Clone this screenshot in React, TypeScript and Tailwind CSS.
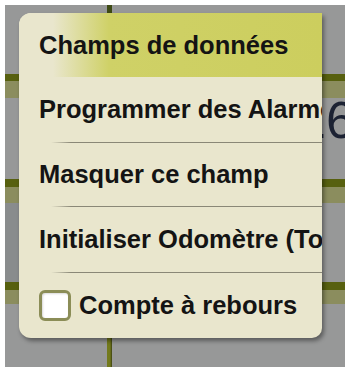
import React from "react";

const items = [
  { label: "Champs de données", h: "h-[64px]", active: true },
  { label: "Programmer des Alarmes", h: "h-[65px]" },
  { label: "Masquer ce champ", h: "h-[64px]", sep: true },
  { label: "Initialiser Odomètre (Total)", h: "h-[66px]", sep: true },
];

function Sep() {
  return (
    <div className="absolute left-0 right-0 top-0 h-px bg-[linear-gradient(to_right,rgba(120,118,100,0)_32px,#8a8877_52px,#8a8877)]" />
  );
}

export default function App() {
  return (
    <div
      className="relative w-[346px] h-[367px] overflow-hidden bg-white pt-[5px] pl-[5px] pr-px"
      style={{ fontFamily: '"Liberation Sans", Arial, sans-serif' }}
    >
      {/* background canvas */}
      <div className="relative flex h-[362px] flex-col overflow-hidden bg-[#979898]">
        <div className="h-[69px]" />
        <div className="h-[7px] bg-[#57600f]" />
        <div className="h-[17px] bg-[#8b8d5e]" />
        <div className="h-[81px]" />
        <div className="h-[8px] bg-[#57600f]" />
        <div className="h-[16px] bg-[#8b8d5e]" />
        <div className="flex h-[79px]">
          <div className="w-[14px] bg-[#898c8d]" />
          <div className="flex-1" />
        </div>
        <div className="h-[8px] bg-[#57600f]" />
        <div className="h-[14px] bg-[#8b8d5e]" />
        <div className="flex-1" />

        {/* vertical grid line */}
        <div className="absolute left-[102px] top-0 h-[10px] w-[5px] bg-[#3e4a14]" />
        <div className="absolute left-[102px] top-[330px] h-[40px] w-[5px] bg-[linear-gradient(to_right,#737a1c_60%,#3d4212)]" />

        {/* digit peeking out from under the menu */}
        <div className="absolute left-[292px] top-[89px] text-[52px] leading-none text-[#1c2233]">
          16
        </div>
      </div>

      {/* popup menu */}
      <div className="absolute left-[19px] top-[13px] w-[303px] overflow-hidden whitespace-nowrap rounded-tl-[12px] rounded-bl-[12px] rounded-br-[10px] bg-[#e9e6cd] shadow-[2px_3px_4px_rgba(0,0,0,0.4)]">
        {items.map((it) => (
          <div
            key={it.label}
            className={`relative flex items-center pl-[20px] text-[25.5px] font-bold text-[#141414] ${it.h} ${
              it.active
                ? "bg-[linear-gradient(to_right,#e9e6cd_34px,#cfd167_90px,#ccce5e)]"
                : ""
            }`}
          >
            {it.sep && <Sep />}
            <span>{it.label}</span>
          </div>
        ))}
        <div className="relative flex h-[66px] items-center gap-[8px] pl-[20px] text-[25.5px] font-bold text-[#141414]">
          <Sep />
          <div className="h-[31px] w-[32px] rounded-[6px] border-[3px] border-[#8b8d57] bg-white shadow-[inset_1px_1px_2px_rgba(0,0,0,0.15)]" />
          <span>Compte à rebours</span>
        </div>
      </div>
    </div>
  );
}
